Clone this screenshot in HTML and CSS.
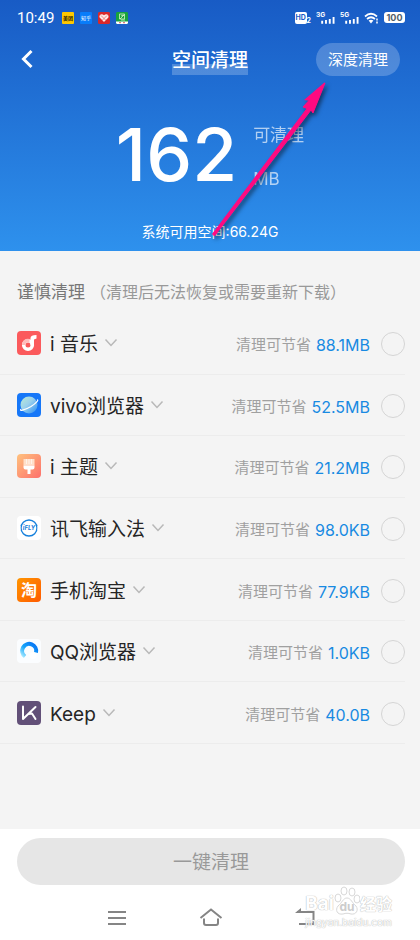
FILE: index.html
```html
<!DOCTYPE html>
<html lang="zh-CN">
<head>
<meta charset="utf-8">
<meta name="viewport" content="width=device-width, initial-scale=1">
<title>空间清理</title>
<link rel="stylesheet" href="styles.css">
</head>
<body>
<header class="hero">
  <div class="status">
    <span class="clock">10:49</span>
    <span class="notes">
      <span class="note note-yellow">美团</span>
      <span class="note note-blue">知乎</span>
      <svg class="note" viewBox="0 0 12 12"><rect width="12" height="12" rx="1" fill="#d8282c"/><path d="M6 10 1.600 5.600C.600 3 3.600 1 6 3.300C8.400 1 11.400 3 10.400 5.600Z" fill="#ffe9e6"/><path d="M3 3.500 6 6.500 9 3.500M4.500 8 6 6.500 7.500 8" fill="none" stroke="#d8282c" stroke-width=".5"/></svg>
      <svg class="note" viewBox="0 0 12 12"><rect width="12" height="12" rx="1" fill="#18a33c"/><path d="M0 9.500h12V11a1 1 0 0 1-1 1H1a1 1 0 0 1-1-1Z" fill="#fff"/><path d="M3.500 2h5v5h-5zM5 4l3-1M4 7l4-4M5 8h4" fill="none" stroke="#d9f5c8" stroke-width=".8"/><path d="M3 10.700h2M7 10.700h2" stroke="#c33" stroke-width=".8"/></svg>
    </span>
    <span class="signals">
      <span class="hd"><b class="hd-box">HD</b><b class="hd-sub">2</b></span>
      <svg class="cell" viewBox="0 0 20 14"><text x="0" y="6" class="gen">3G</text><path d="M6.500 10v3M10.500 9v4M14.500 8v5M18.500 6v7" stroke="#fff" stroke-width="2"/></svg>
      <svg class="cell" viewBox="0 0 20 14"><text x="0" y="6" class="gen">5G</text><path d="M6.500 10v3M10.500 9v4M14.500 8v5M18.500 6v7" stroke="#fff" stroke-width="2"/></svg>
      <svg class="wifi" viewBox="0 0 15 12"><path d="M1 4.500Q7 -1 13 4.500M3 7Q7 3.500 11 7" fill="none" stroke="#fff" stroke-width="1.700"/><path d="M4.600 8.600Q7 6.700 9.400 8.600L7 11.500Z" fill="#fff"/><path d="M13 6.500v2M13 9.500v2" stroke="#fff" stroke-width="1.500"/></svg>
      <span class="battery">100</span>
    </span>
  </div>
  <div class="titlebar">
    <button class="back" type="button" aria-label="返回"><svg viewBox="0 0 12 20"><path d="M10.500 2 2.500 10l8 8" fill="none" stroke="#fff" stroke-width="3"/></svg></button>
    <h1 class="title">空间清理</h1>
    <button class="deep" type="button">深度清理</button>
  </div>
  <div class="amount">
    <span class="number">162</span>
    <span class="units"><span>可清理</span><span>MB</span></span>
  </div>
  <p class="available">系统可用空间:66.24G</p>
  <svg class="pointer" viewBox="0 0 130 170"><path d="M12.500 156 107 30.500 103 29 125 5 113 35 111 32 14.500 158Z" fill="#ff0a80" stroke="#ff0a80" stroke-width="1"/><path d="M125 4 104 22l7 1-1 8 3 3Z" fill="#ff0a80"/></svg>
</header>
<main class="content">
  <h2 class="notice">谨慎清理 <span>（清理后无法恢复或需要重新下载）</span></h2>
  <ul class="list">
    <li class="row">
      <svg class="app" viewBox="0 0 24 24"><rect width="24" height="24" rx="4" fill="#fb5a5c"/><circle cx="11" cy="14" r="4.300" fill="none" stroke="#fff" stroke-width="3.600"/><path d="M13.500 14V7q0-3 6-3v3.500l-2.500 1V14Z" fill="#fff"/><path d="M4.900 14a6.100 6.100 0 0 1 7.600-6v3.800a2.500 2.500 0 0 0-4 2.200Z" fill="#ffbcbc"/></svg>
      <button class="name" type="button">i 音乐<svg viewBox="0 0 14 10"><path d="m1.500 1.500 5.500 6 5.500-6"/></svg></button>
      <label class="save" for="a1">清理可节省 <b>88.1MB</b></label><input class="pick" type="checkbox" id="a1">
    </li>
    <li class="row">
      <svg class="app" viewBox="0 0 24 24"><defs><linearGradient id="planet" x1="0" y1="0" x2="1" y2="1"><stop stop-color="#bcebd6"/><stop offset=".45" stop-color="#9ad0ec"/><stop offset="1" stop-color="#278cf4"/></linearGradient></defs><rect width="24" height="24" rx="4" fill="#1677f8"/><circle cx="12" cy="12" r="8.500" fill="url(#planet)"/><path d="M4 16C2 18.500 7 17.500 14 13.500C20 9.800 22 6.500 20 7" fill="none" stroke="#fff" stroke-width="1.200"/></svg>
      <button class="name" type="button">vivo浏览器<svg viewBox="0 0 14 10"><path d="m1.500 1.500 5.500 6 5.500-6"/></svg></button>
      <label class="save" for="a2">清理可节省 <b>52.5MB</b></label><input class="pick" type="checkbox" id="a2">
    </li>
    <li class="row">
      <svg class="app" viewBox="0 0 24 24"><defs><linearGradient id="theme" x1="0" y1="0" x2="1" y2="1"><stop stop-color="#ffc27e"/><stop offset="1" stop-color="#fd6f6b"/></linearGradient></defs><rect width="24" height="24" rx="4" fill="url(#theme)"/><path d="M6.500 5h11v6.500h-11z" fill="#ffdfc9"/><path d="M6.500 11.500h11v2q0 2-2 2h-2V20h-3v-4.500h-2q-2 0-2-2Z" fill="#fff"/><path d="M9.500 5v5M12 5v5M14.500 5v5" stroke="#fff" stroke-width=".6"/></svg>
      <button class="name" type="button">i 主题<svg viewBox="0 0 14 10"><path d="m1.500 1.500 5.500 6 5.500-6"/></svg></button>
      <label class="save" for="a3">清理可节省 <b>21.2MB</b></label><input class="pick" type="checkbox" id="a3">
    </li>
    <li class="row">
      <svg class="app" viewBox="0 0 24 24"><rect width="24" height="24" rx="4" fill="#fff"/><circle cx="12" cy="12" r="8" fill="none" stroke="#1680dc" stroke-width="1.400"/><path d="M3 10v4M21 10v4" stroke="#fff" stroke-width="1"/><text x="12" y="14" text-anchor="middle" class="fly">iFLY</text></svg>
      <button class="name" type="button">讯飞输入法<svg viewBox="0 0 14 10"><path d="m1.500 1.500 5.500 6 5.500-6"/></svg></button>
      <label class="save" for="a4">清理可节省 <b>98.0KB</b></label><input class="pick" type="checkbox" id="a4">
    </li>
    <li class="row">
      <svg class="app" viewBox="0 0 24 24"><defs><linearGradient id="shop" x1="0" y1="0" x2="1" y2="1"><stop stop-color="#ff9500"/><stop offset="1" stop-color="#ff5a00"/></linearGradient></defs><rect width="24" height="24" rx="4" fill="url(#shop)"/><text x="12" y="18" text-anchor="middle" class="tao">淘</text></svg>
      <button class="name" type="button">手机淘宝<svg viewBox="0 0 14 10"><path d="m1.500 1.500 5.500 6 5.500-6"/></svg></button>
      <label class="save" for="a5">清理可节省 <b>77.9KB</b></label><input class="pick" type="checkbox" id="a5">
    </li>
    <li class="row">
      <svg class="app" viewBox="0 0 24 24"><defs><linearGradient id="ring" x1="0" y1="1" x2="1" y2="0"><stop stop-color="#a8eaff"/><stop offset=".45" stop-color="#15a4fa"/><stop offset="1" stop-color="#0670f4"/></linearGradient></defs><rect width="24" height="24" rx="4" fill="#fbfdff"/><path d="M8 17.500A7 7 0 1 1 19 13.500" fill="none" stroke="url(#ring)" stroke-width="4"/><path d="M12 16.500q1-4 5-3 4 2 2 5-3 3-6 0Z" fill="#fff"/></svg>
      <button class="name" type="button">QQ浏览器<svg viewBox="0 0 14 10"><path d="m1.500 1.500 5.500 6 5.500-6"/></svg></button>
      <label class="save" for="a6">清理可节省 <b>1.0KB</b></label><input class="pick" type="checkbox" id="a6">
    </li>
    <li class="row">
      <svg class="app" viewBox="0 0 24 24"><rect width="24" height="24" rx="4" fill="#625078"/><path d="M6 5.500V18L18.500 6M11.500 13l3.500-.500 3.500 5.500" fill="none" stroke="#fff" stroke-width="2" stroke-linecap="round" stroke-linejoin="round"/></svg>
      <button class="name" type="button">Keep<svg viewBox="0 0 14 10"><path d="m1.500 1.500 5.500 6 5.500-6"/></svg></button>
      <label class="save" for="a7">清理可节省 <b>40.0B</b></label><input class="pick" type="checkbox" id="a7">
    </li>
  </ul>
</main>
<footer class="footer">
  <button class="clean" type="button">一键清理</button>
  <nav class="nav">
    <button type="button" aria-label="菜单"><svg viewBox="0 0 24 20"><path d="M3 4h18M3 10h18M3 16h18"/></svg></button>
    <button type="button" aria-label="主页"><svg viewBox="0 0 24 20"><path d="M1.500 10 12 1.500 22.500 10M5 10.500V15q0 2 2 2h10q2 0 2-2v-4.500"/></svg></button>
    <button type="button" aria-label="返回"><svg viewBox="0 0 24 20"><path d="M4 4h16.500V16H6"/><path class="tip" d="M2 5 8 0v5Z"/></svg></button>
  </nav>
  <div class="mark">
    <div class="mark-top"><span>Bai</span><svg viewBox="0 0 26 30"><ellipse cx="4" cy="12" rx="3" ry="4"/><ellipse cx="10" cy="5" rx="3" ry="4"/><ellipse cx="18" cy="6" rx="3" ry="4"/><ellipse cx="23" cy="13" rx="3" ry="4"/><path d="M13 12c4 0 5 5 9 8 3 4 0 9-5 8-3-1-5-1-8 0-6 1-8-4-5-8 4-3 5-8 9-8Z"/><text x="13" y="25" text-anchor="middle">du</text></svg><span class="mark-cn">经验</span></div>
    <div class="mark-url">jingyan.baidu.com</div>
  </div>
</footer>
</body>
</html>
```
FILE: styles.css
```css
* { box-sizing: border-box; }
body {
  margin: 0;
  min-height: 100vh;
  display: flex;
  flex-direction: column;
  background: #fff;
  font-family: Inter, "Noto Sans CJK SC", sans-serif;
}
button { border: 0; padding: 0; background: none; color: inherit; font: inherit; }
svg { display: block; flex: none; }
h1, h2, p, ul { margin: 0; padding: 0; font-weight: 400; }

.hero {
  position: relative;
  height: 251px;
  color: #fff;
  background: linear-gradient(#185bc5, #2e91ed);
}
.status { display: flex; align-items: center; height: 35px; padding: 0 15px 0 17px; }
.clock { width: 45px; font-family: Roboto, sans-serif; font-size: 15px; line-height: 20px; }
.notes { display: flex; gap: 6px; flex: 1; }
.note { width: 12px; height: 12px; border-radius: 1px; font-size: 5px; line-height: 12px; text-align: center; }
.note-yellow { background: #ffc800; color: #2a2200; font-weight: 700; }
.note-blue { background: #087cfa; }
.signals { display: flex; align-items: center; gap: 5px; }
.hd { display: flex; align-items: flex-end; }
.hd-box { width: 12px; height: 12px; border-radius: 2px; background: #fff; color: #185bc5; font-size: 7px; line-height: 12px; text-align: center; }
.hd-sub { font-size: 7px; line-height: 6px; }
.cell { width: 19px; height: 14px; }
.gen { font: 700 7px Inter, sans-serif; fill: #fff; }
.wifi { width: 15px; height: 12px; }
.battery { width: 21px; height: 11px; border-radius: 3px; background: #fff; color: #50606a; font-size: 9px; font-weight: 700; line-height: 11px; text-align: center; }

.titlebar {
  display: grid;
  grid-template-columns: 1fr auto 1fr;
  align-items: center;
  height: 48px;
  padding: 0 20px;
}
.back { justify-self: start; }
.back svg { width: 14px; height: 20px; }
.title {
  padding-top: 3px;
  font-size: 19px;
  line-height: 28px;
  font-weight: 500;
  background: linear-gradient(transparent 20px, rgba(255, 255, 255, .22) 20px);
}
.deep {
  justify-self: end;
  padding: 0 12px;
  border-radius: 17px;
  background: rgba(255, 255, 255, .22);
  font-size: 15px;
  line-height: 33px;
}
.amount { display: flex; justify-content: center; gap: 16px; height: 139px; padding: 28px 0; }
.number { font-size: 73px; line-height: 88px; font-weight: 500; }
.units { display: flex; flex-direction: column; gap: 20px; padding: 12px 0; font-size: 17px; line-height: 24px; opacity: .65; }
.available { font-size: 14px; line-height: 20px; text-align: center; }
.pointer {
  position: absolute;
  left: 200px;
  top: 78px;
  width: 130px;
  height: 170px;
  filter: drop-shadow(2px 3px 2px rgba(0, 0, 0, .5));
}

.content { flex: 1; background: #f4f4f4; }
.notice { display: flex; gap: 5px; padding: 30px 17px 9px; color: #777; font-size: 17px; line-height: 23px; }
.notice span { color: #999; font-size: 16px; }
.list { display: grid; grid-auto-rows: 1fr; min-height: 431px; margin-right: 15px; list-style: none; }
.row { display: flex; align-items: center; border-bottom: 1px solid #ececec; padding-left: 17px; }
.app { width: 24px; height: 24px; }
.fly { font: italic 700 6px Inter, sans-serif; fill: #1680dc; }
.tao { font: 700 16px "Noto Sans CJK SC", sans-serif; fill: #fff; }
.name { display: flex; align-items: center; gap: 6px; margin-left: 9px; padding-top: 4px; color: #252525; font-size: 19px; line-height: 28px; }
.name svg { width: 14px; height: 10px; margin-bottom: 4px; fill: none; stroke: #b8b8b8; stroke-width: 1.5; }
.save { display: flex; align-items: center; gap: 5px; margin-left: auto; padding-top: 4px; color: #a0a0a0; font-size: 15px; line-height: 24px; }
.save b { color: #188ae2; font-size: 16px; font-weight: 400; }
.pick { appearance: none; width: 24px; height: 24px; margin: 2px 0 0 11px; border: 1px solid #d5d5d5; border-radius: 50%; }

.footer { position: relative; height: 111px; padding: 9px 15px 0 17px; }
.clean { display: block; width: 100%; height: 47px; padding-top: 2px; border-radius: 24px; background: #e6e6e6; color: #999; font-size: 19px; line-height: 45px; }
.nav { display: flex; justify-content: center; gap: 70px; padding-top: 23px; }
.nav svg { width: 24px; height: 20px; fill: none; stroke: #858585; stroke-width: 2; }
.nav .tip { fill: #858585; stroke: none; }
.mark { position: absolute; right: 28px; bottom: 12px; color: #fff; text-shadow: 0 0 1px #bbb, 0 0 1px #bbb; }
.mark-top { display: flex; align-items: flex-end; font-size: 19px; line-height: 24px; font-weight: 700; height: 30px; }
.mark svg { width: 26px; height: 30px; fill: #fff; stroke: #d8d8d8; stroke-width: 1; }
.mark svg text { font: 700 12px Inter, sans-serif; fill: #ccc; stroke: none; text-shadow: none; }
.mark-cn { font-size: 16px; }
.mark-url { font-size: 10px; line-height: 12px; }
```
